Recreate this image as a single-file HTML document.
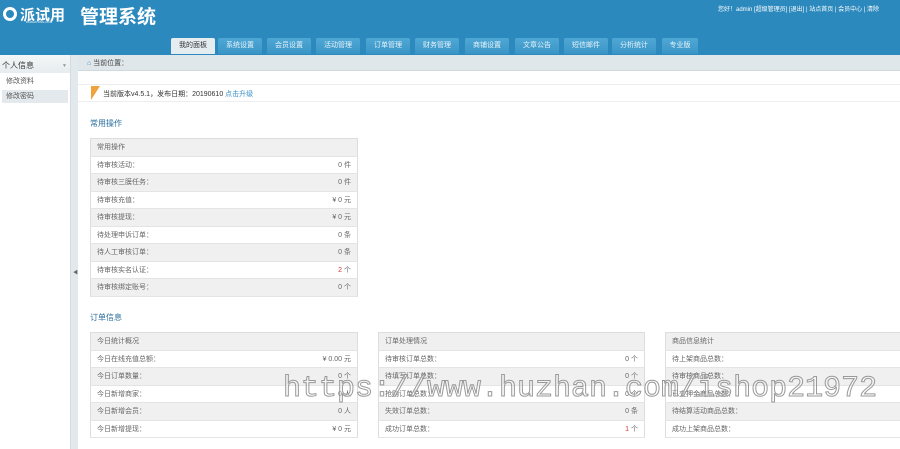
<!DOCTYPE html><html><head><meta charset="utf-8"><style>
*{margin:0;padding:0;box-sizing:border-box}
body{width:900px;height:449px;overflow:hidden;background:#fff;font-family:"Liberation Sans","Noto Sans CJK SC",sans-serif;font-size:7px;color:#555;position:relative}
.hd{position:absolute;left:0;top:0;width:900px;height:55px;background:#2c89bd}
.logo{position:absolute;left:3px;top:4px;color:#fff;font-size:15px;font-weight:bold}
.logo .c{display:inline-block;width:14px;height:14px;border:3px solid #fff;border-radius:50%;vertical-align:-1px;margin-right:3px}
.logo small{position:absolute;left:23px;top:16px;font-size:3px;font-weight:normal}
.title{position:absolute;left:80px;top:2px;color:#fff;font-size:19px;font-weight:bold}
.top{position:absolute;left:718px;top:4px;color:#fff;font-size:6px;white-space:nowrap}
.tab{position:absolute;top:38px;height:16px;width:44px;background:linear-gradient(#4fa7d4,#3a95c6);color:#e8f4fb;font-size:7px;text-align:center;line-height:16px;border-radius:2px 2px 0 0}
.tab.on{background:#e6edf1;color:#333}
.bar{position:absolute;left:78px;top:55px;width:822px;height:16px;background:#dfe7eb;border-bottom:1px solid #cfd9de}
.bar span{position:absolute;left:9px;top:3px;font-size:7px;color:#444}
.side{position:absolute;left:0;top:55px;width:70px;height:394px;background:#fff}
.sh{height:18px;background:linear-gradient(#f4f7f8,#e6ecef);font-size:8px;color:#333;padding:5px 0 0 2px}
.sh i{position:absolute;right:3px;top:8px;font-style:normal;font-size:5px;color:#999}
.si{height:13px;margin:2px 2px 0;padding-left:4px;font-size:7px;line-height:13px;color:#555}
.div{position:absolute;left:70px;top:55px;width:8px;height:394px;background:#e2e9ed;border-left:1px solid #d2dce1}
.ver{position:absolute;left:78px;top:84px;width:822px;height:18px;border-top:1px solid #eee;border-bottom:1px solid #eee;font-size:7px;color:#333;padding:4px 0 0 25px}
.ver a{color:#3a8fc6}
.flag{position:absolute;left:13px;top:1px;width:0;height:0;border-left:9px solid #f0a23c;border-bottom:14px solid transparent}
h3{position:absolute;font-size:8px;color:#2a6f9e;font-weight:normal}
table{position:absolute;border-collapse:collapse;border:1px solid #ddd;font-size:7px;color:#666}
td{height:17.5px;padding:0 6px;border-bottom:1px solid #e4e4e4;white-space:nowrap}
tr:nth-child(odd){background:#f0f0f0}
td.r{text-align:right}
.red{color:#d33}
.wm{position:absolute;left:283px;top:372px;font-family:"Liberation Mono",monospace;font-size:30px;color:rgba(255,255,255,.3);-webkit-text-stroke:1px #999;white-space:nowrap;letter-spacing:0px}
</style></head><body>
<div class="hd">
<div class="logo"><span class="c"></span>派试用<small>PAISHIYONG.COM</small></div>
<div class="title">管理系统</div>
<div class="top">您好！admin [超级管理员] [退出] | 站点首页 | 会员中心 | 清除</div>
<div class="tab on" style="left:171px">我的面板</div>
<div class="tab" style="left:218px">系统设置</div>
<div class="tab" style="left:267px">会员设置</div>
<div class="tab" style="left:316px">活动管理</div>
<div class="tab" style="left:366px">订单管理</div>
<div class="tab" style="left:415px">财务管理</div>
<div class="tab" style="left:465px">商铺设置</div>
<div class="tab" style="left:515px">文章公告</div>
<div class="tab" style="left:564px">短信邮件</div>
<div class="tab" style="left:612px">分析统计</div>
<div class="tab" style="left:662px;width:36px">专业版</div>
</div>
<div class="side"><div class="sh">个人信息<i>▼</i></div><div class="si">修改资料</div><div class="si" style="background:#e3e9ed">修改密码</div></div>
<div class="div"><span style="position:absolute;left:2px;top:214px;font-size:5px;color:#666">◀</span></div>
<div class="bar"><span><b style="color:#3a8fc6">⌂</b> 当前位置：</span></div>
<div class="ver"><div class="flag"></div>当前版本v4.5.1，发布日期：20190610 <a>点击升级</a></div>
<h3 style="left:90px;top:118px">常用操作</h3>
<table style="left:90px;top:138px;width:268px">
<tr><td colspan="2">常用操作</td></tr>
<tr><td>待审核活动：</td><td class="r">0 件</td></tr>
<tr><td>待审核三膜任务：</td><td class="r">0 件</td></tr>
<tr><td>待审核充值：</td><td class="r">¥ 0 元</td></tr>
<tr><td>待审核提现：</td><td class="r">¥ 0 元</td></tr>
<tr><td>待处理申诉订单：</td><td class="r">0 条</td></tr>
<tr><td>待人工审核订单：</td><td class="r">0 条</td></tr>
<tr><td>待审核实名认证：</td><td class="r"><span class="red">2</span> 个</td></tr>
<tr><td>待审核绑定账号：</td><td class="r">0 个</td></tr>
</table>
<h3 style="left:90px;top:312px">订单信息</h3>
<table style="left:90px;top:332px;width:268px">
<tr><td colspan="2">今日统计概况</td></tr>
<tr><td>今日在线充值总额：</td><td class="r">¥ 0.00 元</td></tr>
<tr><td>今日订单数量：</td><td class="r">0 个</td></tr>
<tr><td>今日新增商家：</td><td class="r">0 人</td></tr>
<tr><td>今日新增会员：</td><td class="r">0 人</td></tr>
<tr><td>今日新增提现：</td><td class="r">¥ 0 元</td></tr>
</table>
<table style="left:378px;top:332px;width:267px">
<tr><td colspan="2">订单处理情况</td></tr>
<tr><td>待审核订单总数：</td><td class="r">0 个</td></tr>
<tr><td>待填写订单总数：</td><td class="r">0 个</td></tr>
<tr><td>抢购订单总数：</td><td class="r">0 个</td></tr>
<tr><td>失效订单总数：</td><td class="r">0 条</td></tr>
<tr><td>成功订单总数：</td><td class="r"><span class="red">1</span> 个</td></tr>
</table>
<table style="left:665px;top:332px;width:260px">
<tr><td colspan="2">商品信息统计</td></tr>
<tr><td>待上架商品总数：</td><td></td></tr>
<tr><td>待审核商品总数：</td><td></td></tr>
<tr><td>已交押金商品总数：</td><td></td></tr>
<tr><td>待结算活动商品总数：</td><td></td></tr>
<tr><td>成功上架商品总数：</td><td></td></tr>
</table>
<div class="wm">https://www.huzhan.com/ishop21972</div>
</body></html>
